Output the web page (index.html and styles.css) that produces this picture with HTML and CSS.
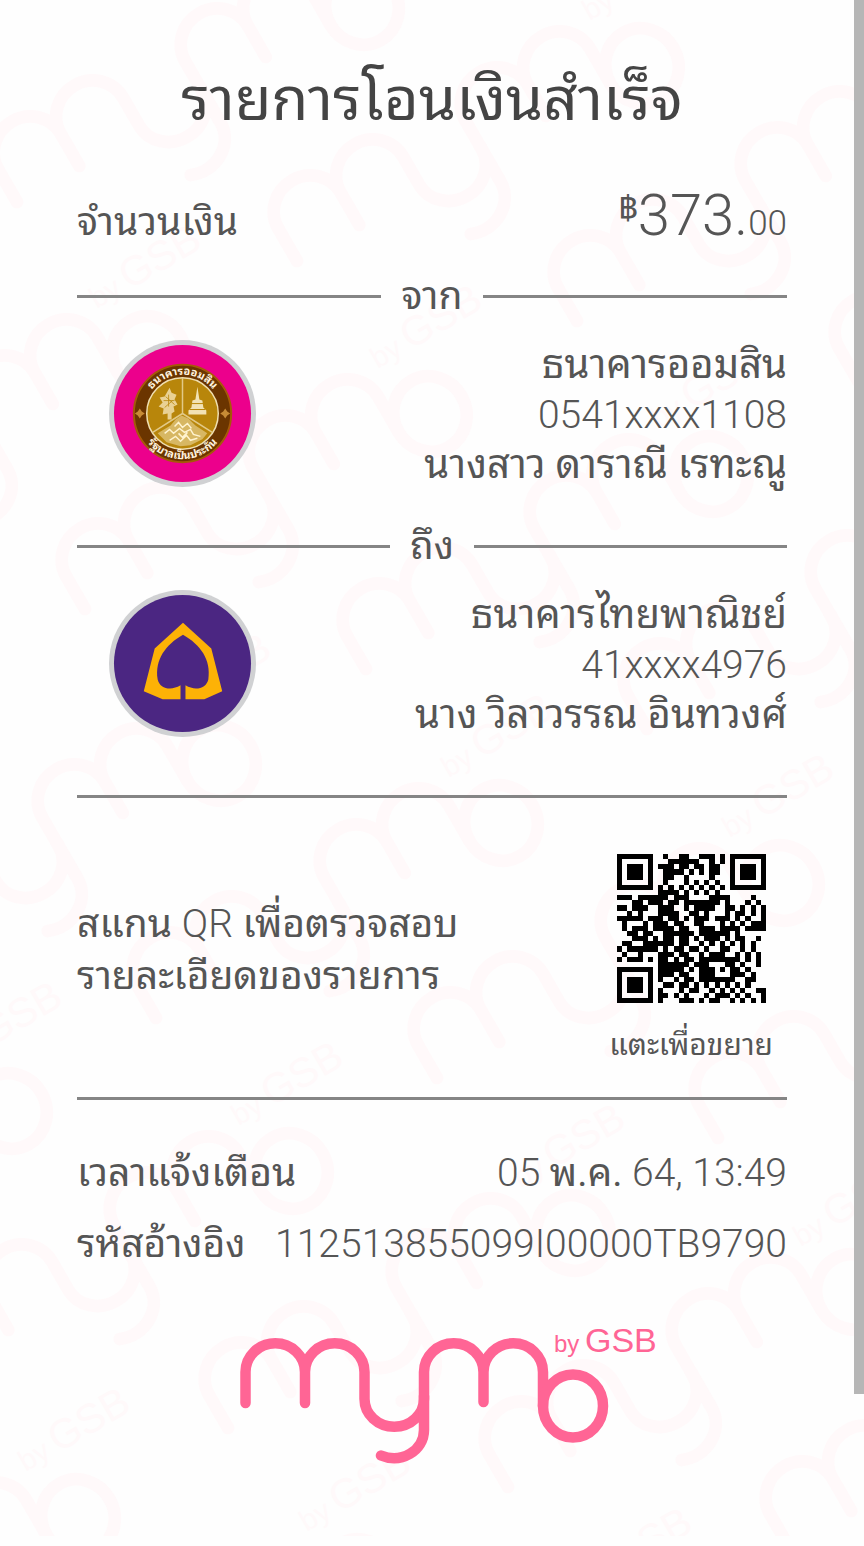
FILE: index.html
```html
<!DOCTYPE html>
<html lang="th">
<head>
<meta charset="utf-8">
<meta name="viewport" content="width=device-width, initial-scale=1">
<title>รายการโอนเงินสำเร็จ</title>
<link rel="stylesheet" href="styles.css">
</head>
<body>
<svg class="watermark" viewBox="0 0 864 1536" preserveAspectRatio="xMidYMin slice" aria-hidden="true">
  <defs>
    <g id="mymo">
      <g fill="none" stroke="currentColor" stroke-width="10.500" stroke-linecap="round" stroke-linejoin="round">
        <path d="M-327.500 -3V-34A29 28 0 0 1 -268 -34V-3M-268 -34A29 28 0 0 1 -208.500 -34V-7A29 27 0 0 0 -149 -7V-34A29 28 0 0 1 -89.500 -34V-4M-89.500 -34A29 28 0 0 1 -30 -34V0"/>
        <path d="M-149 -10V24C-149 45 -172 58 -192 49.500"/>
        <ellipse cx="0" cy="0" rx="30" ry="31.500"/>
      </g>
      <text class="logo-by" x="-19" y="-54">by</text>
      <text class="logo-gsb" x="12" y="-54">GSB</text>
    </g>
    <g id="mark"><use href="#mymo" transform="rotate(-30) scale(1.21)"/></g>
  </defs>
  <use href="#mark" x="79" y="-55"/><use href="#mark" x="362" y="7"/><use href="#mark" x="642" y="66"/><use href="#mark" x="922" y="126"/><use href="#mark" x="1203" y="186"/>
  <use href="#mark" x="149" y="354"/><use href="#mark" x="430" y="414"/><use href="#mark" x="711" y="474"/><use href="#mark" x="992" y="534"/><use href="#mark" x="1273" y="594"/>
  <use href="#mark" x="-62" y="703"/><use href="#mark" x="219" y="763"/><use href="#mark" x="501" y="823"/><use href="#mark" x="782" y="883"/><use href="#mark" x="1063" y="943"/>
  <use href="#mark" x="10" y="1111"/><use href="#mark" x="291" y="1171"/><use href="#mark" x="573" y="1233"/><use href="#mark" x="853" y="1292"/><use href="#mark" x="1134" y="1352"/>
  <use href="#mark" x="78" y="1517"/><use href="#mark" x="359" y="1577"/><use href="#mark" x="640" y="1637"/><use href="#mark" x="921" y="1697"/>
</svg>
<div class="scrollbar" aria-hidden="true"></div>

<main class="slip">
  <h1 class="title">รายการโอนเงินสำเร็จ</h1>

  <div class="row amount-row">
    <span>จำนวนเงิน</span>
    <span class="amount"><span class="baht">฿</span><span class="whole">373.</span><span class="decimals">00</span></span>
  </div>

  <h2 class="divider">จาก</h2>
  <section class="party">
    <svg class="bank" viewBox="0 0 148 148" role="img" aria-label="ธนาคารออมสิน">
      <defs>
        <path id="arc-top" d="M35 74A39 39 0 0 1 113 74"/>
        <path id="arc-bottom" d="M28 74A46 46 0 0 0 120 74"/>
      </defs>
      <circle cx="74" cy="74" r="74" fill="#d0d1d3"/><circle cx="74" cy="74" r="69" fill="#ec008c"/>
      <circle cx="74" cy="74" r="49" fill="#6b3500" stroke="#a45a08" stroke-width="2"/>
      <circle cx="74" cy="74" r="36" fill="#b8860b" stroke="#f0dfb0" stroke-width="1.500"/>
      <path d="M74 38V74M74 74L44 93M74 74L104 93" stroke="#e2c987" stroke-width="1.500" fill="none"/>
      <path d="M89 47L91 60L94 61L95 68L98 71V75H80V71L83 68L84 61L87 60Z" fill="#f2e2b5"/>
      <path d="M83 64H95M81 70H97" stroke="#b8860b"/>
      <path d="M61 48l2 5 5 2-2 5 3 5-4 2 1 5-3 2v6h-4v-6l-5 1 1-6-5-2 4-4-3-5 5-1z" fill="#e9d194"/>
      <path d="M60 55v12M55 61h11M56 68l8-7M57 57l9 8" stroke="#b8860b" stroke-width=".8"/>
      <path d="M49 94L62 86L67 80L73 76L80 79L87 86L99 94L94 100L82 106L72 107L58 103Z" fill="#d7b763"/>
      <path d="M56 94l5-4 4 4 6-5 5 4 6-3 3 5 7 2M61 101l6-4 5 5 6-6 4 5 7-2M66 87l4-4 4 5 5-4 4 5M70 94l4 4 5-5" fill="none" stroke="#fff3cf" stroke-width="1.500"/>
      <path d="M31 69l2 3 3 2-3 2-2 3-2-3-3-2 3-2zM117 69l2 3 3 2-3 2-2 3-2-3-3-2 3-2z" fill="#c78b35"/>
      <text class="seal-text"><textPath href="#arc-top" startOffset="50%">ธนาคารออมสิน</textPath></text>
      <text class="seal-text"><textPath href="#arc-bottom" startOffset="50%">รัฐบาลเป็นประกัน</textPath></text>
    </svg>
    <div class="details"><p>ธนาคารออมสิน</p><p class="number">0541xxxx1108</p><p>นางสาว ดาราณี เรทะณู</p></div>
  </section>

  <h2 class="divider">ถึง</h2>
  <section class="party">
    <svg class="bank" viewBox="0 0 148 148" role="img" aria-label="ธนาคารไทยพาณิชย์">
      <circle cx="74" cy="74" r="74" fill="#d0d1d3"/><circle cx="74" cy="74" r="69" fill="#4b2682"/>
      <path fill="#fdb206" fill-rule="evenodd" d="M74.500 33L103 59L114 102L96 110H77V96C87 102 98 99 100 90C103 70 92 55 74.500 45C57 55 46 70 49 90C51 99 62 102 72 96V110H54L35 102L46 59Z"/>
    </svg>
    <div class="details"><p>ธนาคารไทยพาณิชย์</p><p class="number">41xxxx4976</p><p>นาง วิลาวรรณ อินทวงศ์</p></div>
  </section>

  <hr class="rule">
  <section class="verify">
    <p class="verify-text">สแกน <span class="number">QR</span> เพื่อตรวจสอบ<br>รายละเอียดของรายการ</p>
    <button class="qr-button" type="button">
      <svg class="qr" viewBox="0 0 29 29" shape-rendering="crispEdges" role="img" aria-label="QR"><path id="qr-modules"/></svg>
      <span>แตะเพื่อขยาย</span>
    </button>
  </section>
  <hr class="rule">

  <dl class="meta">
    <div class="row"><dt>เวลาแจ้งเตือน</dt><dd class="number">05 <span class="month">พ.ค.</span> 64, 13:49</dd></div>
    <div class="row"><dt>รหัสอ้างอิง</dt><dd class="number">112513855099I00000TB9790</dd></div>
  </dl>

  <svg class="logo" viewBox="-381 -81 480 140" role="img" aria-label="mymo by GSB"><use href="#mymo"/></svg>
</main>
<script src="qr.js"></script>
</body>
</html>
```
FILE: styles.css
```css
* { box-sizing: border-box; }
body {
  margin: 0;
  position: relative;
  min-height: 100vh;
  overflow-x: hidden;
  background: #fefefe;
  color: #555;
  font-family: Roboto, "Noto Sans Thai Looped", "Droid Sans Thai", "Noto Looped Thai", Loma, Garuda, Waree, "Noto Sans Thai", "Noto Sans", sans-serif;
  font-size: 39px;
  font-weight: 400;
  line-height: 50px;
}
h1, h2, p, dl, dd { margin: 0; font-weight: inherit; font-size: inherit; }
.number { font-size: 39px; font-weight: 300; }
.month { font-weight: 400; }
.watermark {
  position: absolute;
  top: 0;
  left: 0;
  width: 100%;
  z-index: -1;
  color: #fff9fa;
}
.scrollbar {
  position: absolute;
  top: 0;
  right: 0;
  width: 10px;
  height: 1394px;
  background: #b6b6b6;
}
.slip { padding: 60px 77px 80px; }
.title { color: #444; font-size: 60px; line-height: 80px; text-align: center; }
.row { display: flex; justify-content: space-between; align-items: baseline; white-space: nowrap; }
.amount-row { margin-top: 40px; height: 88px; line-height: 70px; }
.amount { display: flex; align-items: baseline; font-weight: 300; }
.whole { font-size: 58px; }
.baht { font-size: 34px; font-weight: 400; align-self: flex-start; line-height: 56px; }
.decimals { font-size: 35px; }
.divider { display: flex; align-items: center; gap: 20px; height: 56px; }
.divider::before, .divider::after { content: ""; flex: 1; height: 3px; background: #858585; }
.party { display: flex; justify-content: space-between; height: 194px; padding: 16px 0 0 32px; }
.bank { width: 147px; height: 147px; flex: none; }
.seal-text { fill: #fff3df; font-size: 11px; font-weight: 700; text-anchor: middle; }
.details { font-size: 40px; text-align: right; white-space: nowrap; }
.rule { border: 0; height: 3px; background: #858585; margin: 27px 0 0; }
.verify { display: flex; justify-content: space-between; align-items: flex-start; height: 272px; padding: 56px 14px 0 0; }
.verify-text { padding-top: 44px; line-height: 52px; }
.qr-button {
  display: flex; flex-direction: column; align-items: center; gap: 24px;
  padding: 0; border: 0; background: none; color: inherit;
  font: inherit; font-size: 30px; line-height: 36px; cursor: pointer;
}
.qr { width: 149px; height: 149px; }
.meta { margin-top: 48px; display: grid; gap: 21px; }
.logo { display: block; width: 480px; height: 140px; margin: 56px auto 0; color: #ff6595; }
.logo-by, .logo-gsb { font-family: "Liberation Sans", sans-serif; font-weight: 400; fill: currentColor; }
.logo-by { font-size: 24px; }
.logo-gsb { font-size: 34px; }
```
FILE: qr.js
```js
const rows = [
  "#######..#..##..###.#.#######",
  "#.....#...######..#.#.#.....#",
  "#.###.#.###.##.##.##..#.###.#",
  "#.###.#..####.#.#.##..#.###.#",
  "#.###.#..##..#....#...#.###.#",
  "#.....#..#...#.#.#.#..#.....#",
  "#######.#.#.#.#.#.#.#.#######",
  "........####.#.#.#.#.........",
  "###.######.###....####....#..",
  "...##.###.##.#######.#...#.#.",
  "##.###..###..#.####..##.#.#.#",
  "..#.#...####..##.#...#.##.#.#",
  "#####.###.##.#.###.###.#.#..#",
  ".#...#.###.##..##...#.#.#.###",
  ".#.###.####.##..###.####.####",
  "..##.##..######.######.#.....",
  "...###.#.##.##.#.###.#.##..#.",
  ".##..######.##..#.#.#.#.#.#..",
  "#.######.#.##.##.#..##..#.#..",
  ".#..#...###.##..#.###..#.#.#.",
  "#.###.#.##.#.##.########.#.#.",
  "........######.###...##.#..#.",
  "#######.#####.#.###.#.##.#...",
  "#.....#.###.##..###...###.#..",
  "#.###.#.#..#.##.#######..##..",
  "#.###.#..##.##.#.#.#.#.#.#...",
  "#.###.#.#...#.##..#.#.#.#..##",
  "#.....#.##.#.#...#.###.#.#..#",
  "#######.#...###.#.##..#.#.#.#"
];
let modules = "";
rows.forEach((row, y) => {
  [...row].forEach((cell, x) => {
    if (cell === "#") modules += `M${x} ${y}h1v1h-1z`;
  });
});
document.getElementById("qr-modules").setAttribute("d", modules);
```
